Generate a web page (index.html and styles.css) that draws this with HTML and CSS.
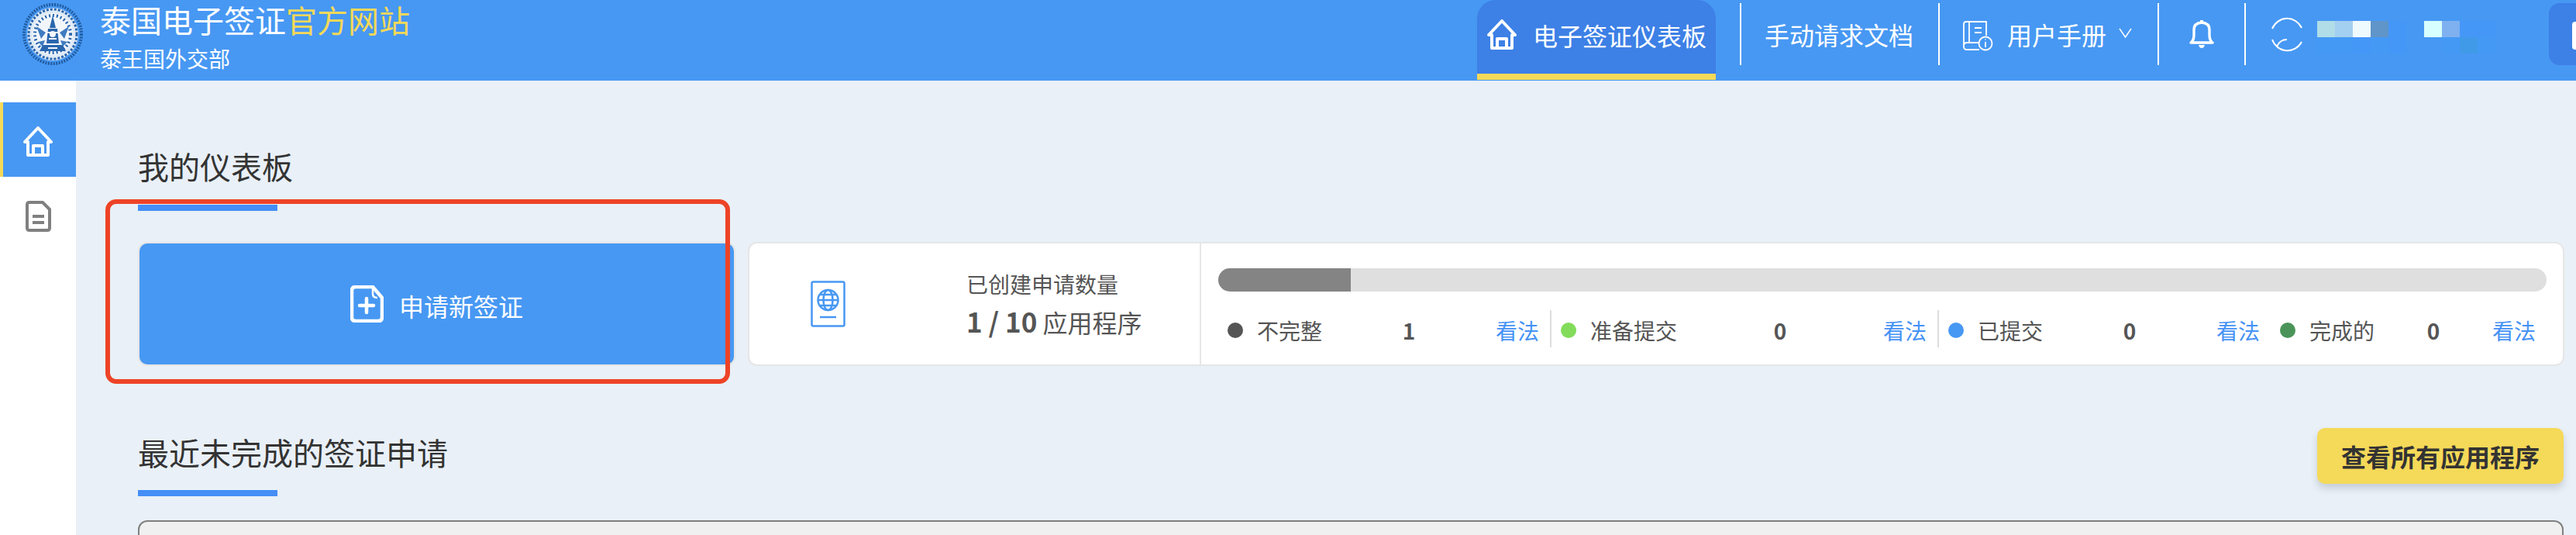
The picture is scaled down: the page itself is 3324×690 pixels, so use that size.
FILE: index.html
```html
<!DOCTYPE html>
<html lang="zh-CN">

<head>
  <meta charset="UTF-8" />
  <meta name="viewport" content="width=device-width, initial-scale=1.0" />
  <title>泰国电子签证</title>
  <link rel="stylesheet" href="styles.css">
</head>

<body>
  <header class="header">

    <div class="brand">
      <svg class="brand-logo" viewBox="0 0 78 80">
        <ellipse cx="39" cy="40" rx="37" ry="38" fill="none" stroke="#1f5a9e" stroke-width="4" stroke-dasharray="2 1.5" />
        <ellipse cx="39" cy="40" rx="33" ry="34" fill="#dfeaf6" />
        <ellipse cx="39" cy="40" rx="31" ry="32" fill="none" stroke="#2a66ad" stroke-width="3" stroke-dasharray="3 2" />
        <ellipse cx="39" cy="40" rx="26" ry="27" fill="#f2f6fb" />
        <ellipse cx="39" cy="40" rx="23" ry="24" fill="none" stroke="#2a66ad" stroke-width="4" stroke-dasharray="2 3" />
        <path d="M39 16 L43 32 H35 Z M33 33 H45 L47 52 H31 Z M26 54 H52 L56 62 H22 Z" fill="#2a66ad" />
        <path d="M18 30 L30 38 L24 46 Z M60 30 L48 38 L54 46 Z M20 50 L29 48 L26 56 Z M58 50 L49 48 L52 56 Z" fill="#3f7cc0" />
        <circle cx="39" cy="40" r="4" fill="#f2f6fb" />
        <path d="M33 58 H45 M34 46 H44 M30 38 H48" stroke="#f2f6fb" stroke-width="2" />
      </svg>
      <div>
        <div class="brand-title">泰国电子签证<span class="brand-accent">官方网站</span></div>
        <div class="brand-sub">泰王国外交部</div>
      </div>
    </div>

    <nav class="nav">
      <a class="nav-tab">
        <svg class="icon-home" viewBox="0 0 40 40">
          <path d="M3 20 L20 2 L37 20 H33 V37 H7 V20 Z M14 37 V25 H26 V37" />
        </svg>
        <span>电子签证仪表板</span>
      </a>
      <i class="nav-sep"></i>
      <a class="nav-link nav-docs">手动请求文档</a>
      <i class="nav-sep"></i>
      <a class="nav-link nav-manual">
        <svg class="icon-book" viewBox="0 0 40 40">
          <path d="M22 38 H6 Q2 38 2 34 V5 Q2 2 5 2 H31 V20 M2 33 Q2 29 6 29 H22 M9 2 V29 M16 10 H25 M16 16 H25" />
          <circle cx="30" cy="30" r="8.5" />
          <path d="M30 28 V35 M30 24.5 V25.5" />
        </svg>
        <span>用户手册</span>
        <svg class="icon-chevron" viewBox="0 0 17 13">
          <path d="M1 1 L8.5 12 L16 1" />
        </svg>
      </a>
      <i class="nav-sep"></i>
      <a class="nav-link nav-bell">
        <svg class="icon-bell" viewBox="0 0 32 38">
          <path d="M2 30 Q6 27 6 20 V13 Q6 5 16 4 Q26 5 26 13 V20 Q26 27 30 30 Z" />
          <path class="icon-fill" d="M14 1 H18 V4 H14 Z M12 33 H20 Q19 37 16 37 Q13 37 12 33 Z" />
        </svg>
      </a>
      <i class="nav-sep"></i>
      <a class="nav-user">
        <svg class="icon-user" viewBox="0 0 44 47">
          <path d="M3 16 A21 22 0 0 1 41 15 M41 33 A21 22 0 0 1 3 30 M9 39 Q13 30 22 30" />
        </svg>
        <div class="mosaic">
          <i class="m1"></i><i class="m2"></i><i class="m3"></i><i class="m4"></i><i class="m5"></i><i></i><i class="m6"></i><i class="m7"></i><i class="m5"></i><i class="m5"></i>
          <i class="m8"></i><i class="m8"></i><i class="m5"></i><i class="m8"></i><i class="m5"></i><i></i><i></i><i class="m8"></i><i class="m9"></i><i class="m8"></i>
        </div>
      </a>
      <a class="nav-menu"><b></b></a>
    </nav>

  </header>

  <div class="layout">

    <aside class="sidebar">
      <a class="side-item active">
        <svg class="icon-home" viewBox="0 0 40 40">
          <path d="M3 20 L20 2 L37 20 H33 V37 H7 V20 Z M14 37 V25 H26 V37" />
        </svg>
      </a>
      <a class="side-item">
        <svg class="icon-doc" viewBox="0 0 33 40">
          <path d="M5 2 H22 L31 11 V35 Q31 38 28 38 H5 Q2 38 2 35 V5 Q2 2 5 2 Z" />
          <path d="M9 20 H24 M9 28 H24" />
        </svg>
      </a>
    </aside>

    <main class="content">

      <div class="section-head">
        <div>
          <h2 class="section-title">我的仪表板</h2>
          <div class="section-line"></div>
        </div>
      </div>

      <div class="cards">

        <a class="card card-new">
          <svg class="icon-newdoc" viewBox="0 0 43 48">
            <path d="M7 2 H29 L41 16 V41 Q41 46 36 46 H7 Q2 46 2 41 V7 Q2 2 7 2 Z" />
            <path d="M29 3 V11 Q29 16 35 16" />
            <path class="icon-plus" d="M21 17 V35 M12 26 H30" />
          </svg>
          <span>申请新签证</span>
        </a>

        <div class="card card-count">
          <svg class="icon-passport" viewBox="0 0 45 60">
            <rect x="1.5" y="1.5" width="42" height="57" rx="2" />
            <circle cx="22.500" cy="25" r="13" />
            <ellipse cx="22.500" cy="25" rx="6" ry="13" />
            <path d="M9.500 25 H35.500 M11.500 18 H33.500 M11.500 32 H33.500 M12 47 H33" />
          </svg>
          <div class="count-text">
            <div class="count-label">已创建申请数量</div>
            <div class="count-value"><b>1 / 10</b> 应用程序</div>
          </div>
        </div>

        <div class="card card-progress">
          <div class="bar">
            <div class="bar-fill" style="width: 10%"></div>
          </div>
          <div class="stats">
            <div class="stat stat-line">
              <span class="stat-name"><i class="dot dot-gray"></i>不完整</span>
              <b>1</b>
              <a>看法</a>
            </div>
            <div class="stat stat-line">
              <span class="stat-name"><i class="dot dot-lime"></i>准备提交</span>
              <b>0</b>
              <a>看法</a>
            </div>
            <div class="stat">
              <span class="stat-name"><i class="dot dot-blue"></i>已提交</span>
              <b>0</b>
              <a>看法</a>
            </div>
            <div class="stat">
              <span class="stat-name"><i class="dot dot-green"></i>完成的</span>
              <b>0</b>
              <a>看法</a>
            </div>
          </div>
        </div>

      </div>

      <div class="section-head section-recent">
        <div class="recent-left">
          <h2 class="section-title">最近未完成的签证申请</h2>
          <div class="section-line"></div>
        </div>
        <a class="btn-all">查看所有应用程序</a>
      </div>

      <div class="panel"></div>

    </main>

  </div>

  <!-- 红色标注框 -->
  <div class="mark"></div>
</body>

</html>
```

FILE: styles.css
```css
* {
  box-sizing: border-box;
}

html,
body {
  margin: 0;
  height: 690px;
  overflow: hidden;
}

body {
  font-family: "Noto Sans CJK SC", "Noto Sans", sans-serif;
  color: #555;
  background: #e9f0f7;
}

i {
  display: block;
  flex: none;
}

svg {
  display: block;
  flex: none;
  fill: none;
}

/* header */
.header {
  height: 104px;
  background: #4798f3;
  color: #fff;
  display: flex;
}

.brand {
  flex: 0 0 1906px;
  display: flex;
  align-items: flex-start;
  padding-left: 29px;
}

.brand-logo {
  width: 78px;
  height: 80px;
  margin: 4px 22px 0 0;
}

.brand-title {
  font-size: 40px;
  line-height: 50px;
}

.brand-accent {
  color: #f5d958;
}

.brand-sub {
  font-size: 28px;
  line-height: 50px;
}

.nav {
  flex: none;
  display: flex;
  align-items: flex-start;
  font-size: 32px;
  white-space: nowrap;
}

.nav-tab {
  width: 308px;
  height: 103px;
  padding: 0 0 5px 12px;
  display: flex;
  align-items: center;
  gap: 20px;
  background: #3d80e6;
  border-bottom: 8px solid #f5d958;
  border-radius: 24px 24px 0 0;
}

.nav-sep {
  width: 2px;
  height: 80px;
  margin-top: 4px;
  background: #fff;
}

.nav-link {
  height: 88px;
  display: flex;
  align-items: center;
}

.nav-docs {
  padding: 0 32px 0 30px;
}

.nav-tab + .nav-sep {
  margin-left: 31px;
}

.nav-manual {
  padding: 0 33px 0 29px;
}

.nav-manual span {
  margin-left: 18px;
}

.nav-bell {
  padding: 0 39px 0 39px;
}

.nav-user {
  height: 88px;
  padding-left: 31px;
  display: flex;
  align-items: center;
}

.mosaic {
  margin: 8px 0 0 17px;
  display: grid;
  grid-template-columns: repeat(10, 23px);
  grid-auto-rows: 21px;
}

.m1 { background: #b0dde8; }
.m2 { background: #a3cff0; }
.m3 { background: #effaff; }
.m4 { background: #5f95c9; }
.m5 { background: #4597f7; }
.m6 { background: #d8ffff; }
.m7 { background: #7fb0f0; }
.m8 { background: #4499f5; }
.m9 { background: #419ae8; }

.nav-menu {
  width: 80px;
  height: 80px;
  margin: 4px 0 0 69px;
  padding: 24px 0 0 30px;
  background: #3d80e6;
  border-radius: 14px;
}

.nav-menu b {
  display: block;
  width: 30px;
  height: 36px;
  background: #fff;
  border-radius: 4px;
}

/* icons */
.icon-home {
  width: 40px;
  height: 40px;
  stroke: #fff;
  stroke-width: 4;
  stroke-linejoin: round;
  stroke-linecap: round;
}

.icon-book {
  width: 40px;
  height: 40px;
  margin-top: 4px;
  stroke: #fff;
  stroke-width: 1.8;
}

.icon-chevron {
  width: 17px;
  height: 13px;
  margin: -4px 0 0 16px;
  stroke: #fff;
  stroke-width: 1.5;
}

.icon-bell {
  width: 32px;
  height: 38px;
  stroke: #fff;
  stroke-width: 3.4;
  stroke-linejoin: round;
}

.icon-fill {
  fill: #fff;
  stroke: none;
}

.icon-user {
  width: 44px;
  height: 47px;
  stroke: #fff;
  stroke-width: 2;
}

.icon-doc {
  width: 33px;
  height: 40px;
  stroke: #808080;
  stroke-width: 4;
  stroke-linejoin: round;
}

.icon-newdoc {
  width: 43px;
  height: 48px;
  stroke: #fff;
  stroke-width: 4.5;
  stroke-linejoin: round;
}

.icon-newdoc path + path {
  stroke-width: 2.5;
}

.icon-newdoc .icon-plus {
  stroke-width: 4.5;
  stroke-linecap: round;
}

.icon-passport {
  width: 45px;
  height: 60px;
  stroke: #4798f3;
  stroke-width: 2.5;
}

/* layout */
.layout {
  height: 586px;
  display: flex;
}

.sidebar {
  width: 98px;
  background: #fff;
  padding-top: 28px;
}

.side-item {
  height: 96px;
  padding-top: 6px;
  display: flex;
  align-items: center;
  justify-content: center;
}

.side-item.active {
  background: #4798f3;
  border-left: 4px solid #f5d958;
  padding-right: 4px;
}

.content {
  flex: 1;
  padding: 82px 16px 0 80px;
  overflow: hidden;
}

.section-title {
  margin: 0;
  font-size: 40px;
  line-height: 56px;
  font-weight: 400;
  color: #333;
}

.section-line {
  width: 180px;
  height: 8px;
  margin-top: 22px;
  background: #448ef6;
}

/* cards */
.cards {
  display: flex;
  margin: 40px -1px 0 0;
}

.card {
  height: 160px;
  border: 2px solid #e6e6e6;
  background: #fff;
}

.card-new {
  width: 771px;
  margin-right: 16px;
  background: #4798f3;
  border-radius: 12px;
  color: #fff;
  font-size: 32px;
  display: flex;
  align-items: center;
  justify-content: center;
  gap: 20px;
}

.card-new span {
  margin-top: 4px;
}

.card-count {
  width: 585px;
  padding-left: 79px;
  border-radius: 12px 0 0 12px;
  display: flex;
  align-items: center;
  gap: 156px;
}

.count-text {
  margin-top: -3px;
}

.count-label {
  font-size: 28px;
  line-height: 48px;
}

.count-value {
  font-size: 32px;
  line-height: 48px;
}

.count-value b {
  font-size: 35px;
}

.card-progress {
  flex: 1;
  padding: 32px 21px 0 22px;
  border-left: 0;
  border-radius: 0 12px 12px 0;
}

.bar {
  height: 30px;
  background: #dfdfdf;
  border-radius: 15px;
  overflow: hidden;
}

.bar-fill {
  height: 100%;
  background: #848484;
}

.stats {
  display: grid;
  grid-template-columns: 430px 500px 428px 1fr;
  margin-top: 24px;
  font-size: 28px;
}

.stat {
  height: 48px;
  padding: 4px 14px 0 12px;
  display: flex;
  align-items: center;
  justify-content: space-between;
}

.stat-line {
  border-right: 2px solid #ddd;
}

.stat-name {
  display: flex;
  align-items: center;
  gap: 18px;
}

.stat b {
  color: #555;
}

.stat a {
  color: #4592f5;
}

.dot {
  width: 20px;
  height: 20px;
  border-radius: 50%;
}

.dot-gray { background: #555; }
.dot-lime { background: #82dc5a; }
.dot-blue { background: #4798f3; }
.dot-green { background: #4a9459; }

/* recent */
.section-recent {
  display: flex;
  justify-content: space-between;
  align-items: flex-start;
  margin-top: 80px;
}

.recent-left {
  padding-top: 3px;
}

.recent-left .section-line {
  margin-top: 21px;
}

.btn-all {
  height: 72px;
  padding: 0 31px;
  background: #f5d958;
  color: #333;
  font-size: 32px;
  font-weight: 700;
  line-height: 72px;
  border-radius: 10px;
  box-shadow: 0 6px 10px rgba(60, 70, 90, 0.2);
}

.panel {
  height: 200px;
  margin-top: 31px;
  background: #f0f0f0;
  border: 2px solid #808080;
  border-radius: 12px;
}

/* annotation */
.mark {
  position: absolute;
  left: 136px;
  top: 257px;
  width: 806px;
  height: 238px;
  border: 6px solid #ee4327;
  border-radius: 14px;
}
```
